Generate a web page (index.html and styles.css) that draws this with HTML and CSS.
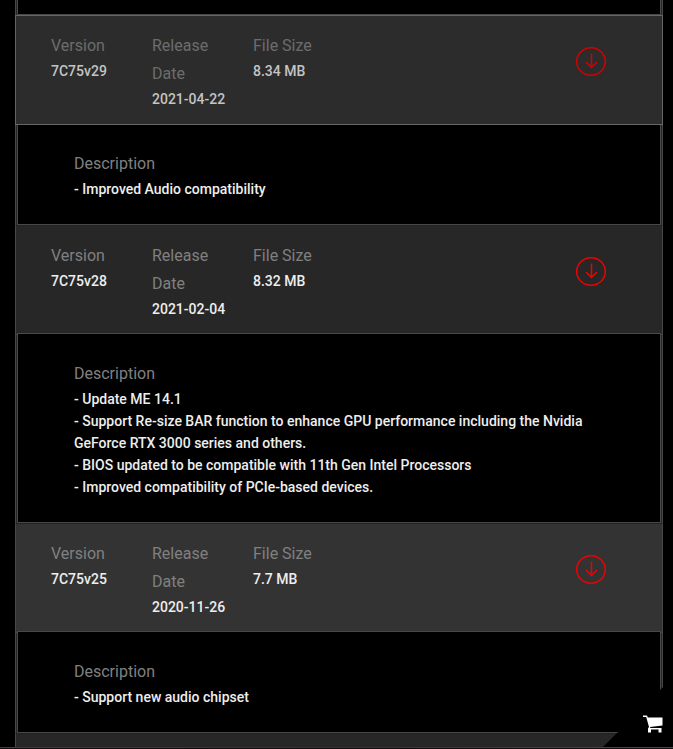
FILE: index.html
```html
<!DOCTYPE html>
<html lang="en">
<head>
    <meta charset="UTF-8">
    <meta name="viewport" content="width=device-width, initial-scale=1.0">
    <title>BIOS Downloads</title>
    <link rel="stylesheet" href="styles.css">
</head>
<body>
    <svg class="sprite" aria-hidden="true">
        <symbol id="icon-download" viewBox="0 0 31 31">
            <ellipse cx="15" cy="15.5" rx="14.3" ry="13.8" />
            <path d="M15.500 7.500v14M10 16l5.500 5.500L21 16" />
        </symbol>
    </svg>

    <main class="downloads">
        <div class="description previous"></div>

        <section class="release">
            <div class="release-header active">
                <dl class="info">
                    <div class="info-item"><dt>Version</dt><dd>7C75v29</dd></div>
                    <div class="info-item"><dt>Release Date</dt><dd>2021-04-22</dd></div>
                    <div class="info-item"><dt>File Size</dt><dd>8.34 MB</dd></div>
                </dl>
                <a href="#" class="download" aria-label="Download 7C75v29"><svg><use href="#icon-download" /></svg></a>
            </div>
            <div class="description">
                <h3>Description</h3>
                <p>- Improved Audio compatibility</p>
            </div>
        </section>

        <section class="release">
            <div class="release-header">
                <dl class="info">
                    <div class="info-item"><dt>Version</dt><dd>7C75v28</dd></div>
                    <div class="info-item"><dt>Release Date</dt><dd>2021-02-04</dd></div>
                    <div class="info-item"><dt>File Size</dt><dd>8.32 MB</dd></div>
                </dl>
                <a href="#" class="download" aria-label="Download 7C75v28"><svg><use href="#icon-download" /></svg></a>
            </div>
            <div class="description">
                <h3>Description</h3>
                <p>- Update ME 14.1<br>
                - Support Re-size BAR function to enhance GPU performance including the Nvidia GeForce RTX 3000 series and others.<br>
                - BIOS updated to be compatible with 11th Gen Intel Processors<br>
                - Improved compatibility of PCIe-based devices.</p>
            </div>
        </section>

        <section class="release">
            <div class="release-header alt">
                <dl class="info">
                    <div class="info-item"><dt>Version</dt><dd>7C75v25</dd></div>
                    <div class="info-item"><dt>Release Date</dt><dd>2020-11-26</dd></div>
                    <div class="info-item"><dt>File Size</dt><dd>7.7 MB</dd></div>
                </dl>
                <a href="#" class="download" aria-label="Download 7C75v25"><svg><use href="#icon-download" /></svg></a>
            </div>
            <div class="description">
                <h3>Description</h3>
                <p>- Support new audio chipset</p>
            </div>
        </section>

        <div class="release-header next"></div>
    </main>

    <div class="page-edge"></div>

    <a href="#" class="cart" aria-label="Shopping cart">
        <svg viewBox="0 0 20 18">
            <path d="M0 .5h4l.8 2H19.500v8l-12.500 1.500.3 1H18.500v4.500H15.500v-3H8v3H5V13.500L6 12 3.200 2H0z" />
        </svg>
    </a>
</body>
</html>
```
FILE: styles.css
```css
* {
    margin: 0;
    padding: 0;
    box-sizing: border-box;
}

body {
    font-family: Roboto, 'Liberation Sans', sans-serif;
    font-size: 14px;
    line-height: 22px;
    background: #000;
    color: #eee;
}

.sprite {
    display: none;
}

.downloads {
    margin: 0 10px 0 15px;
    padding: 0 1px;
    background: #262626;
    border: solid #484848;
    border-width: 0 1px;
}

/* the header covers the side borders of the list */
.release-header {
    display: flex;
    justify-content: space-between;
    margin: 0 -2px -2px;
    padding: 16px 55px 14px 35px;
    background: #272727;
    border: 1px solid #484848;
    border-top-color: #222;
}

.release-header.alt {
    background: #333;
}

.release-header.active {
    position: relative;
    z-index: 1;
    background: #2c2c2c;
    border-color: #666;
}

.release-header.next {
    height: 14px;
    margin-bottom: 0;
    padding: 0;
    border-bottom: none;
}

.info {
    display: flex;
}

.info-item {
    width: 101px;
    padding-right: 20px;
}

dt,
.description h3 {
    font-size: 16px;
    font-weight: 400;
    line-height: 28px;
    color: #808080;
}

dd,
.description p {
    font-weight: 500;
}

dd {
    white-space: nowrap;
}

.active dt {
    color: #6c6c6c;
}

.active dd {
    color: #c4c4c4;
}

.download {
    height: 31px;
    margin-top: 14px;
}

.download svg {
    display: block;
    width: 31px;
    height: 31px;
    fill: none;
    stroke: #f00000;
    stroke-width: 1.5;
}

.active .download svg {
    stroke: #d40000;
}

.description {
    padding: 26px 56px 24px;
    background: #000;
    border: 1px solid #484848;
}

.description.previous {
    height: 15px;
    padding: 0;
    border-top: none;
}

.page-edge {
    height: 2px;
    background: linear-gradient(90deg, #4a3d2e, #3c3028 50%, #54483e);
    border-bottom: 1px solid #120d0c;
}

.cart {
    position: fixed;
    right: 0;
    bottom: 2px;
    width: 70px;
    height: 70px;
    background: #000;
    clip-path: polygon(100% 0, 100% 100%, 0 100%);
}

.cart svg {
    position: absolute;
    right: 10px;
    bottom: 14px;
    width: 20px;
    height: 18px;
    fill: #fff;
}
```
